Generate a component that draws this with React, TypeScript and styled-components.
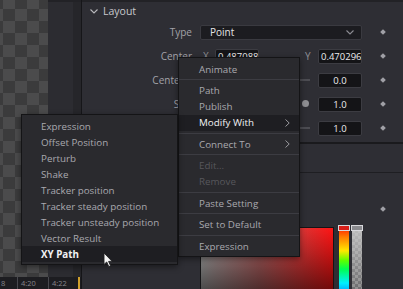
import styled, { createGlobalStyle } from "styled-components";

const GlobalStyle = createGlobalStyle`
  html, body { margin: 0; padding: 0; background: #2d2d33; }
  body { font-family: "Open Sans", "Noto Sans", sans-serif; -webkit-font-smoothing: antialiased; }
`;

type MenuEntry =
  | { label: string; disabled?: boolean; active?: boolean; submenu?: boolean }
  | "sep";

const mainItems: MenuEntry[] = [
  { label: "Animate" },
  "sep",
  { label: "Path" },
  { label: "Publish" },
  { label: "Modify With", active: true, submenu: true },
  "sep",
  { label: "Connect To", submenu: true },
  "sep",
  { label: "Edit...", disabled: true },
  { label: "Remove", disabled: true },
  "sep",
  { label: "Paste Setting" },
  "sep",
  { label: "Set to Default" },
  "sep",
  { label: "Expression" },
];

const subItems = [
  "Expression",
  "Offset Position",
  "Perturb",
  "Shake",
  "Tracker position",
  "Tracker steady position",
  "Tracker unsteady position",
  "Vector Result",
  "XY Path",
];

const Chevron = ({ color = "#b8b8bc" }: { color?: string }) => (
  <svg width="8" height="5" viewBox="0 0 8 5">
    <path d="M0.5 0.5 L4 4 L7.5 0.5" fill="none" stroke={color} strokeWidth="1.1" />
  </svg>
);

const Arrow = () => (
  <svg width="5" height="8" viewBox="0 0 5 8">
    <path d="M0.5 0.5 L4.2 4 L0.5 7.5" fill="none" stroke="#9a9a9f" strokeWidth="1" />
  </svg>
);

const Pointer = () => (
  <svg width="11" height="16" viewBox="0 0 11 16">
    <path
      d="M1 1 L1 12.5 L3.7 10 L5.8 14.6 L7.6 13.8 L5.6 9.4 L9.2 9.4 Z"
      fill="#f4f4f4"
      stroke="#202022"
      strokeWidth="0.9"
      strokeLinejoin="round"
    />
  </svg>
);

const NumberField = ({ value, left }: { value: string; left?: boolean }) => (
  <Input $left={left}>{value}</Input>
);

export default function App() {
  return (
    <>
      <GlobalStyle />
      <Page>
        <LeftArea>
          <Viewer>
            <Checker />
            <SidePane />
          </Viewer>
          <Timeline>
            <RulerStub>8</RulerStub>
            <RulerCell>4:20</RulerCell>
            <RulerCell>4:22</RulerCell>
            <Playhead />
          </Timeline>
        </LeftArea>

        <Inspector>
          <Header>
            <Chevron />
            <span>Layout</span>
          </Header>

          <Row>
            <Label>Type</Label>
            <Dropdown>
              <span>Point</span>
              <Chevron color="#8c8c92" />
            </Dropdown>
            <Key><Diamond /></Key>
          </Row>

          <Row>
            <Label>Center</Label>
            <Pair>
              <Axis>X</Axis>
              <NumberField value="0.487088" left />
              <Axis $push>Y</Axis>
              <NumberField value="0.470296" left />
            </Pair>
            <Key><Diamond /></Key>
          </Row>

          <Row>
            <Label>Center Z</Label>
            <SliderField>
              <Track />
              <NumberField value="0.0" />
            </SliderField>
            <Key><Diamond /></Key>
          </Row>

          <Row>
            <Label>Size</Label>
            <SliderField>
              <Track $hidden>
                <Knob />
              </Track>
              <NumberField value="1.0" />
            </SliderField>
            <Key><Diamond /></Key>
          </Row>

          <Row>
            <Label>Aspect</Label>
            <SliderField>
              <Track />
              <NumberField value="1.0" />
            </SliderField>
            <Key><Diamond /></Key>
          </Row>

          <ThickRule />
          <EmptyBand />

          <ColorSection>
            <Label />
            <Picker>
              <SatValue />
              <HueBar>
                <BarHandle $fill="#d8201a" />
              </HueBar>
              <AlphaBar>
                <BarHandle $fill="#8a8a8e" />
              </AlphaBar>
            </Picker>
            <Key $top={34}><Diamond /></Key>
          </ColorSection>
        </Inspector>

        <Menu $left={178} $top={57} $width={122}>
          {mainItems.map((item, i) =>
            item === "sep" ? (
              <Separator key={i} />
            ) : (
              <MenuRow key={i} $active={item.active} $disabled={item.disabled} $pad={20}>
                <span>{item.label}</span>
                {item.submenu && <Arrow />}
              </MenuRow>
            )
          )}
        </Menu>

        <Menu $left={21} $top={114} $width={157}>
          {subItems.map((label) => (
            <MenuRow key={label} $pad={19} $active={label === "XY Path"} $bold={label === "XY Path"}>
              <span>{label}</span>
            </MenuRow>
          ))}
        </Menu>

        <Cursor>
          <Pointer />
        </Cursor>
      </Page>
    </>
  );
}

const Page = styled.div`
  position: relative;
  width: 403px;
  height: 289px;
  overflow: hidden;
  display: flex;
  background: #2d2d33;
  color: #a6a6ab;
  font-size: 10px;
`;

const LeftArea = styled.div`
  width: 81px;
  display: flex;
  flex-direction: column;
  border-right: 1px solid #161619;
`;

const Viewer = styled.div`
  flex: 1;
  display: flex;
`;

const Checker = styled.div`
  width: 48px;
  background-color: #3b3b3c;
  background-image: conic-gradient(#4b4b4c 25%, #3b3b3c 0 50%, #4b4b4c 0 75%, #3b3b3c 0);
  background-size: 24px 24px;
  background-position: -9px -3px;
`;

const SidePane = styled.div`
  flex: 1;
  border-top: 2px solid #222226;
  background: linear-gradient(to right, #2c2c31 25px, #26262a 25px);
`;

const Timeline = styled.div`
  height: 12px;
  display: flex;
  align-items: stretch;
  background: #1d1d21;
  font-size: 7.5px;
  color: #86868c;
  line-height: 12px;
  white-space: nowrap;
`;

const RulerStub = styled.span`
  width: 16px;
  padding-left: 1px;
`;

const RulerCell = styled.span`
  width: 27px;
  padding-left: 3px;
  border-left: 1px solid #48484e;
`;

const Playhead = styled.span`
  width: 2px;
  margin-left: -1px;
  background: #d0a02c;
`;

const Inspector = styled.div`
  flex: 1;
  display: flex;
  flex-direction: column;
  border-top: 2px solid #222226;
  background: #2e2e34;
`;

const Header = styled.div`
  height: 18px;
  display: flex;
  align-items: center;
  gap: 5px;
  padding-left: 8px;
  color: #c8c8cc;
  font-size: 10.5px;
`;

const Row = styled.div`
  height: 24px;
  display: grid;
  grid-template-columns: 110px 162px 1fr;
  column-gap: 8px;
  align-items: center;
`;

const Label = styled.span`
  text-align: right;
  white-space: nowrap;
  color: #a2a2a8;
`;

const Key = styled.div<{ $top?: number }>`
  display: flex;
  justify-content: center;
  padding-right: 7px;
  align-self: ${({ $top }) => ($top ? "start" : "center")};
  margin-top: ${({ $top }) => ($top ? `${$top}px` : "0")};
`;

const Diamond = styled.span`
  width: 4px;
  height: 4px;
  background: #a0a0a6;
  transform: rotate(45deg);
`;

const Dropdown = styled.div`
  height: 15px;
  box-sizing: border-box;
  display: flex;
  align-items: center;
  justify-content: space-between;
  padding: 0 7px 0 9px;
  background: #1c1c20;
  border: 1px solid #3a3a40;
  border-radius: 2px;
  color: #e4e4e6;
`;

const Pair = styled.div`
  display: flex;
  align-items: center;
`;

const Axis = styled.span<{ $push?: boolean }>`
  box-sizing: border-box;
  color: #8e8e94;
  margin-left: ${({ $push }) => ($push ? "auto" : "0")};
  width: ${({ $push }) => ($push ? "18px" : "15px")};
  padding-left: ${({ $push }) => ($push ? "5px" : "3px")};
`;

const Input = styled.div<{ $left?: boolean }>`
  width: 44px;
  height: 15px;
  box-sizing: border-box;
  display: flex;
  align-items: center;
  justify-content: ${({ $left }) => ($left ? "flex-start" : "center")};
  padding-left: ${({ $left }) => ($left ? "2px" : "0")};
  overflow: hidden;
  white-space: nowrap;
  font-size: 9.5px;
  background: #141417;
  border: 1px solid #3c3c42;
  border-radius: 2px;
  color: #ececee;
`;

const SliderField = styled.div`
  display: flex;
  align-items: center;
  gap: 8px;
  padding-left: 15px;
`;

const Track = styled.div<{ $hidden?: boolean }>`
  position: relative;
  flex: 1;
  height: 2px;
  background: ${({ $hidden }) => ($hidden ? "transparent" : "#4c4c52")};
`;

const Knob = styled.span`
  position: absolute;
  right: 1px;
  top: -3px;
  width: 7px;
  height: 7px;
  border-radius: 50%;
  background: #8e8e92;
`;

const ThickRule = styled.div`
  margin-top: 2px;
  height: 2px;
  background: #1a1a1d;
`;

const EmptyBand = styled.div`
  height: 28px;
  border-bottom: 1px solid #1e1e22;
`;

const ColorSection = styled.div`
  flex: 1;
  display: grid;
  grid-template-columns: 110px 162px 1fr;
  column-gap: 8px;
  align-items: start;
  overflow: hidden;
`;

const Picker = styled.div`
  margin-top: 54px;
  height: 70px;
  display: flex;
`;

const SatValue = styled.div`
  width: 134px;
  box-sizing: border-box;
  border: 1px solid #141416;
  background:
    linear-gradient(to bottom, rgba(0, 0, 0, 0) 0%, rgba(0, 0, 0, 0.2) 35%, rgba(0, 0, 0, 0.55) 90%),
    linear-gradient(to right, #a8a8a8 0%, #b06060 45%, #ff1414 100%);
`;

const HueBar = styled.div`
  position: relative;
  width: 10px;
  margin-left: 5px;
  background: linear-gradient(
    to bottom,
    #ff1a00 0%,
    #ff7a00 14%,
    #ffe800 34%,
    #5cff00 48%,
    #00ff50 60%,
    #00f0ff 80%,
    #0090ff 96%
  );
`;

const AlphaBar = styled.div`
  position: relative;
  width: 10px;
  margin-left: 3px;
  background:
    linear-gradient(to bottom, rgba(210, 210, 210, 0.85), rgba(210, 210, 210, 0.15)),
    conic-gradient(#7a7a7a 25%, #505052 0 50%, #7a7a7a 0 75%, #505052 0);
  background-size: 100% 100%, 6px 6px;
`;

const BarHandle = styled.span<{ $fill: string }>`
  position: absolute;
  left: -1px;
  right: -1px;
  top: -2px;
  height: 6px;
  box-sizing: border-box;
  border: 1.5px solid #d8d8dc;
  background: ${({ $fill }) => $fill};
`;

const Menu = styled.div<{ $left: number; $top: number; $width: number }>`
  position: absolute;
  left: ${({ $left }) => $left}px;
  top: ${({ $top }) => $top}px;
  width: ${({ $width }) => $width}px;
  box-sizing: border-box;
  padding: 3px 0 2px;
  background: #2a2a2e;
  border: 1px solid #141416;
  box-shadow: 0 2px 6px rgba(0, 0, 0, 0.45);
`;

const MenuRow = styled.div<{ $active?: boolean; $disabled?: boolean; $bold?: boolean; $pad: number }>`
  height: 16px;
  display: flex;
  align-items: center;
  justify-content: space-between;
  padding: 0 9px 0 ${({ $pad }) => $pad}px;
  white-space: nowrap;
  font-size: 9.8px;
  font-weight: ${({ $bold }) => ($bold ? 700 : 400)};
  background: ${({ $active }) => ($active ? "#1e1e22" : "transparent")};
  color: ${({ $active, $disabled }) =>
    $disabled ? "#57575c" : $active ? "#f2f2f4" : "#a9a9ae"};
`;

const Separator = styled.div`
  height: 5.5px;
  display: flex;
  align-items: center;

  &::after {
    content: "";
    flex: 1;
    height: 1px;
    background: #3c3c42;
  }
`;

const Cursor = styled.div`
  position: absolute;
  left: 103px;
  top: 252px;
  display: flex;
`;
